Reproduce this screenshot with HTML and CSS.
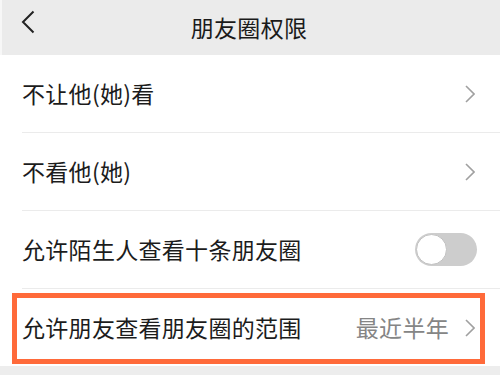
FILE: index.html
```html
<!DOCTYPE html>
<html lang="zh-CN">
<head>
<meta charset="utf-8">
<link rel="stylesheet" href="styles.css">
</head>
<body>
<header class="bar">
  <svg class="back" width="14" height="24" viewBox="0 0 14 24"><path d="M12.5 1.5 L2 12 L12.5 22.5" fill="none" stroke="#222" stroke-width="2"/></svg>
  <h1 class="title">朋友圈权限</h1>
</header>
<main class="list">
  <div class="row">
    <span class="label">不让他(她)看</span>
    <svg class="chev" width="10" height="18" viewBox="0 0 10 18"><path d="M1 1 L9 9 L1 17" fill="none" stroke="#a0a0a0" stroke-width="1.6"/></svg>
  </div>
  <div class="row">
    <span class="label">不看他(她)</span>
    <svg class="chev" width="10" height="18" viewBox="0 0 10 18"><path d="M1 1 L9 9 L1 17" fill="none" stroke="#a0a0a0" stroke-width="1.6"/></svg>
  </div>
  <div class="row">
    <span class="label">允许陌生人查看十条朋友圈</span>
    <span class="toggle"><span class="knob"></span></span>
  </div>
  <div class="row last highlight">
    <span class="label">允许朋友查看朋友圈的范围</span>
    <span class="value">最近半年</span>
    <svg class="chev" width="10" height="18" viewBox="0 0 10 18"><path d="M1 1 L9 9 L1 17" fill="none" stroke="#a0a0a0" stroke-width="1.6"/></svg>
  </div>
</main>
</body>
</html>
```
FILE: styles.css
```css
html, body {
  margin: 0;
  padding: 0;
}
body {
  background: #ededed;
  font-family: "Noto Sans CJK SC", "Noto Sans", sans-serif;
  color: #1c1c1c;
  width: 500px;
  height: 375px;
  overflow: hidden;
}
.bar {
  height: 55px;
  background: #ebebeb;
  display: flex;
  align-items: center;
  justify-content: center;
  position: relative;
  border-left: 2px solid #f7f7f7;
  box-sizing: border-box;
}
.back {
  position: absolute;
  left: 19px;
  top: 10px;
}
.title {
  margin: 0 4px 0 0;
  font-size: 23px;
  font-weight: 400;
  line-height: 1;
  color: #1a1a1a;
  letter-spacing: 0.3px;
}
.list {
  background: #fff;
}
.row {
  display: flex;
  align-items: center;
  height: 77px;
  margin-left: 22px;
  padding-right: 26px;
  border-bottom: 1px solid #ebebeb;
  font-size: 23px;
  line-height: 1;
  position: relative;
}
.row.last {
  border-bottom: none;
}
.label {
  flex: 1;
  color: #1c1c1c;
  letter-spacing: 0.3px;
}
.value {
  color: #858585;
  margin-right: 16px;
  letter-spacing: 0.3px;
}
.chev {
  display: block;
  margin-right: -1px;
}
.toggle {
  width: 62px;
  height: 33px;
  border-radius: 17px;
  background: #cdcdcd;
  display: flex;
  align-items: center;
  padding-left: 1px;
  box-sizing: border-box;
  margin-right: -3px;
}
.knob {
  width: 31px;
  height: 31px;
  border-radius: 50%;
  background: #fff;
  box-sizing: border-box;
  border: 1px solid #c2c2c2;
}
.highlight::before {
  content: "";
  position: absolute;
  left: -10px;
  right: 15px;
  top: 4px;
  bottom: 2px;
  border: 5px solid #ff6a3a;
  box-sizing: border-box;
  pointer-events: none;
}
```
